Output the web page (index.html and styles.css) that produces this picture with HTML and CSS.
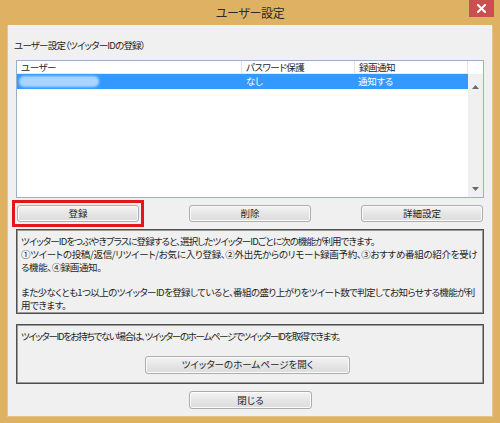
FILE: index.html
```html
<!DOCTYPE html>
<html lang="ja">
<head>
<meta charset="utf-8">
<title>ユーザー設定</title>
<link rel="stylesheet" href="styles.css">
</head>
<body>
<div class="window">
  <div class="titlebar">
    <div></div>
    <div class="title">ユーザー設定</div>
    <div class="close-wrap"><div class="close">
      <svg width="9" height="9" viewBox="0 0 9 9"><path d="M1 1 L8 8 M8 1 L1 8" stroke="#fff" stroke-width="2" stroke-linecap="square"/></svg>
    </div></div>
  </div>
  <div class="content">
    <div class="label">ユーザー設定（ツイッターIDの登録）</div>
    <div class="listbox">
      <div class="lv-head">
        <div class="col c1">ユーザー</div>
        <div class="col c2">パスワード保護</div>
        <div class="col c3">録画通知</div>
        <div class="col c4"></div>
      </div>
      <div class="lv-body">
        <div class="rows">
          <div class="row selected">
            <div class="cell c1"><span class="blur"></span></div>
            <div class="cell c2">なし</div>
            <div class="cell c3">通知する</div>
          </div>
        </div>
        <div class="scrollbar">
          <svg class="arrow" width="7" height="4" viewBox="0 0 7 4"><path d="M0 4 L3.5 0 L7 4 Z" fill="#6a6a6a"/></svg>
          <svg class="arrow" width="7" height="4" viewBox="0 0 7 4"><path d="M0 0 L3.5 4 L7 0 Z" fill="#6a6a6a"/></svg>
        </div>
      </div>
    </div>
    <div class="btn-row">
      <div class="highlight"><button class="btn btn-main">登録</button></div>
      <button class="btn btn-main">削除</button>
      <button class="btn btn-main">詳細設定</button>
    </div>
    <div class="box box1">
      <p class="line kana-tight">ツイッターIDをつぶやきプラスに登録すると、選択したツイッターIDごとに次の機能が利用できます。</p>
      <p class="line loose">①ツイートの投稿/返信/リツイート/お気に入り登録、②外出先からのリモート録画予約、③おすすめ番組の紹介を受け</p>
      <p class="line">る機能、④録画通知。</p>
      <p class="line">&nbsp;</p>
      <p class="line mid">また少なくとも1つ以上のツイッターIDを登録していると、番組の盛り上がりをツイート数で判定してお知らせする機能が利</p>
      <p class="line">用できます。</p>
    </div>
    <div class="box box2">
      <p class="line kana-tighter">ツイッターIDをお持ちでない場合は、ツイッターのホームページでツイッターIDを取得できます。</p>
      <button class="btn btn-home">ツイッターのホームページを開く</button>
    </div>
    <div class="close-row">
      <button class="btn btn-main">閉じる</button>
    </div>
  </div>
</div>
</body>
</html>
```
FILE: styles.css
```css
* { box-sizing: border-box; }
html, body { margin: 0; padding: 0; }
body {
  width: 500px;
  height: 423px;
  overflow: hidden;
  background: #dfb263;
  font-family: "Noto Sans CJK JP", "Noto Sans", sans-serif;
  font-feature-settings: "palt";
  color: #1e1e1e;
}
.window {
  width: 500px;
  height: 423px;
  background: #dfb263;
  display: flex;
  flex-direction: column;
}
.titlebar {
  height: 25px;
  display: grid;
  grid-template-columns: 1fr auto 1fr;
  align-items: start;
}
.title {
  font-size: 12px;
  line-height: 25px;
  color: #2a2a2a;
  letter-spacing: -0.3px;
}
.close-wrap { display: flex; justify-content: flex-end; padding-right: 6px; }
.close {
  width: 25px;
  height: 17px;
  background: #c9504f;
  display: flex;
  align-items: center;
  justify-content: center;
}
.close svg { display: block; }
.content {
  margin: 0 7px;
  height: 392px;
  background: #f0f0f0;
  border: 1px solid #e3c48a;
  border-top: none;
  display: flex;
  flex-direction: column;
  padding: 0 8px 0 8px;
}
.label {
  margin-top: 14px;
  margin-left: -2px;
  font-size: 9.5px;
  line-height: 13px;
  letter-spacing: -0.8px;
}
.listbox {
  margin-top: 8px;
  width: 468px;
  height: 138px;
  border: 1px solid #99b0c8;
  background: #fff;
  display: flex;
  flex-direction: column;
}
.lv-head {
  display: flex;
  height: 13px;
  font-size: 9.5px;
  line-height: 13px;
  letter-spacing: -0.5px;
}
.lv-head .col {
  border-right: 1px solid #e3e3e3;
  border-bottom: 1px solid #e8e8e8;
  padding-left: 4px;
  background: #fff;
}
.lv-head .c4 { border: none; }
.c1 { width: 225px; }
.c2 { width: 113px; }
.c3 { width: 113px; }
.c4 { width: 15px; }
.lv-body { flex: 1; display: flex; }
.rows { width: 451px; }
.row { display: flex; height: 15px; font-size: 9.5px; line-height: 15px; letter-spacing: -0.3px; }
.row .cell { padding-left: 4px; }
.row .c3 { padding-left: 3px; }
.selected { background: #3399ff; color: #fff; }
.blur {
  display: inline-block;
  width: 80px;
  height: 11px;
  margin-top: 2px;
  margin-left: -2px;
  background: #a8d4ff;
  border-radius: 5px;
  filter: blur(1px);
  vertical-align: top;
}
.scrollbar {
  width: 15px;
  background: #f0f0f0;
  display: flex;
  flex-direction: column;
  justify-content: space-between;
  align-items: center;
  padding: 11px 0 6px 0;
}
.arrow { display: block; }
.btn {
  font-family: inherit;
  font-feature-settings: "palt";
  font-size: 9.5px;
  line-height: 15px;
  color: #1e1e1e;
  border: 1px solid #adadad;
  border-radius: 3px;
  background: linear-gradient(#f4f4f4, #e6e6e6 50%, #dcdcdc);
  padding: 0;
  margin: 0;
  box-shadow: inset 0 0 0 1px #fbfbfb;
}
.btn-main { width: 122px; height: 17px; display: block; }
.btn-row {
  margin-top: 7px;
  display: flex;
  justify-content: space-between;
  align-items: center;
  width: 468px;
  padding: 0 1px;
  height: 17px;
}
.highlight {
  border: 3px solid #e5141d;
  padding: 2px;
  margin: -5px -5px;
}
.box {
  width: 468px;
  border: 1px solid #4f4f4f;
  box-shadow: inset 0 0 0 1px #9a9a9a;
  padding: 5px 4px 0 4px;
}
.box1 { margin-top: 7px; height: 85px; }
.box2 { margin-top: 10px; height: 60px; display: flex; flex-direction: column; align-items: center; }
.box2 .line { align-self: stretch; }
.line {
  margin: 0;
  font-size: 9.5px;
  line-height: 12.8px;
  white-space: nowrap;
  letter-spacing: -0.4px;
}
.kana-tight { letter-spacing: -0.9px; }
.kana-tighter { letter-spacing: -1.35px; }
.loose { letter-spacing: -0.3px; }
.mid { letter-spacing: -0.6px; }
.btn-home { width: 205px; height: 18px; margin-top: 13px; margin-left: -5px; }
.close-row {
  margin-top: 7px;
  display: flex;
  justify-content: center;
  width: 468px;
}
.close-row .btn { height: 18px; width: 123px; margin-left: 1px; }
```
